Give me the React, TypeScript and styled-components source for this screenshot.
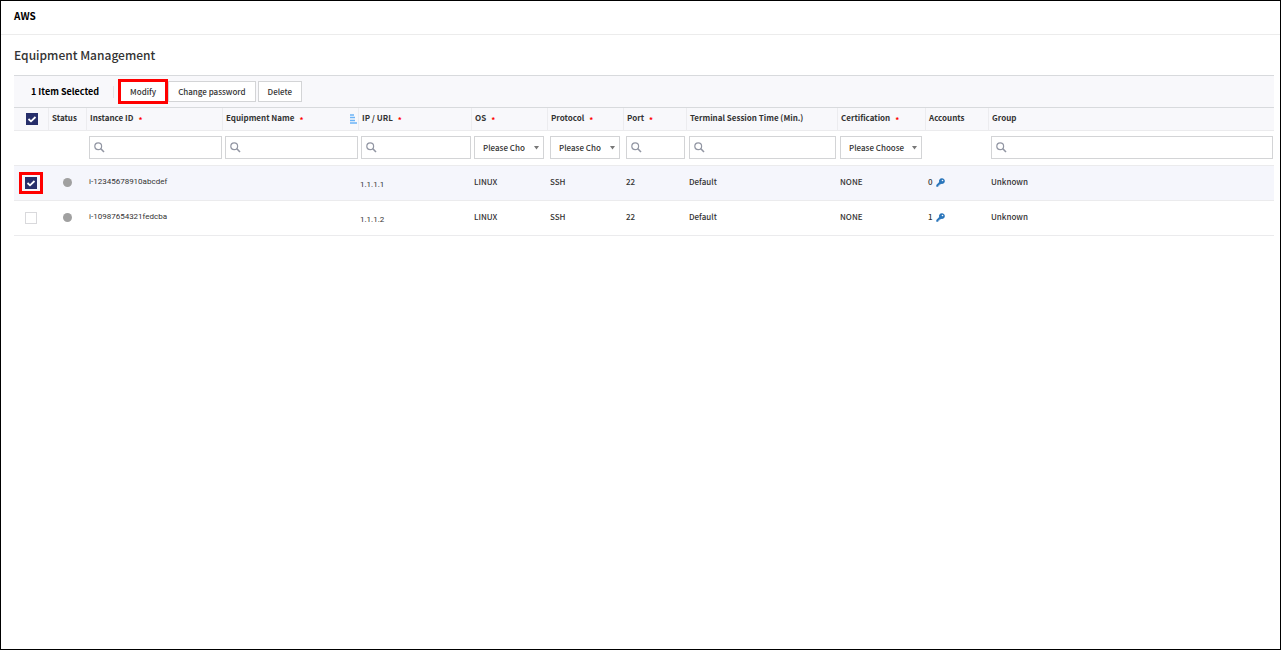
import React, { useState } from "react";
import styled, { createGlobalStyle, css } from "styled-components";

const GlobalStyle = createGlobalStyle`
  * { box-sizing: border-box; }
  body {
    margin: 0;
    background: #fff;
    color: #333;
    font-family: "Noto Sans CJK KR", "Noto Sans", sans-serif;
    font-size: 8px;
    font-weight: 500;
    line-height: 12px;
  }
  button, input, select { font: inherit; color: inherit; margin: 0; }
`;

const Page = styled.div`
  min-height: 100vh;
  border: 1px solid #000;
`;

const TopBar = styled.header`
  display: flex;
  align-items: center;
  height: 34px;
  padding: 0 13px 3px;
  border-bottom: 1px solid #ececec;
  color: #000;
  font-size: 10px;
  font-weight: 700;
`;

const Main = styled.main`
  padding: 10px 6px 0 13px;
`;

const Title = styled.h1`
  margin: 0 0 10px;
  color: #333;
  font-size: 12px;
  font-weight: 500;
  line-height: 20px;
`;

const Toolbar = styled.div`
  display: flex;
  align-items: center;
  gap: 2px;
  height: 32px;
  padding-left: 17px;
  border-top: 1px solid #d8dadd;
  background: #f8f8fb;
`;

const Selected = styled.div`
  margin-right: 4px;
  padding-right: 14px;
  border-right: 1px solid #e4e5e8;
  color: #000;
  font-size: 9px;
  font-weight: 700;
`;

const highlight = css`
  position: relative;
  &::after {
    content: "";
    position: absolute;
    inset: -3px;
    border: 3px solid #f00;
    pointer-events: none;
  }
`;

const ToolButton = styled.button<{ $marked?: boolean }>`
  height: 21px;
  padding: 0 9px;
  border: 1px solid #d3d4d6;
  background: #fff;
  color: #333;
  cursor: pointer;
  ${(p) => p.$marked && highlight}
`;

const Table = styled.table`
  width: 100%;
  table-layout: fixed;
  border-collapse: separate;
  border-spacing: 0;
  border-top: 1px solid #d8dadd;
`;

const HeadCell = styled.th`
  height: 23px;
  padding: 0 0 2px 3px;
  border-left: 1px solid #ececef;
  border-bottom: 1px solid #ebebed;
  background: #f8f8fb;
  font-weight: 700;
  text-align: left;
  white-space: nowrap;
  &:first-child { border-left: 0; }
`;

const HeadCheck = styled.div`
  padding: 2px 0 0 9px;
`;

const HeadLabel = styled.div`
  display: flex;
  align-items: center;
  height: 12px;
`;

const Required = styled.span`
  margin-left: 5px;
  padding-top: 3px;
  color: #f00;
`;

const SortIcon = styled.svg`
  margin: 2px 1px 0 auto;
`;

const FilterCell = styled.td`
  height: 35px;
  padding: 0 0 1px 3px;
  border-bottom: 1px solid #ebebed;
`;

const SearchBox = styled.label<{ $inset?: boolean }>`
  display: flex;
  align-items: center;
  height: 23px;
  margin-right: ${(p) => (p.$inset ? 1 : 0)}px;
  padding-left: 4px;
  border: 1px solid #d3d4d6;
  background: #fff;
  input {
    flex: 1;
    min-width: 0;
    border: 0;
    outline: 0;
    background: none;
  }
`;

const SelectBox = styled.div<{ $inset?: boolean }>`
  position: relative;
  margin-right: 3px;
  svg {
    position: absolute;
    top: 10px;
    right: 5px;
    pointer-events: none;
  }
  select {
    display: block;
    appearance: none;
    width: 100%;
    height: 23px;
    padding: 0 ${(p) => (p.$inset ? 18 : 16)}px 0 8px;
    border: 1px solid #d3d4d6;
    border-radius: 0;
    background: #fff;
  }
`;

const Row = styled.tr<{ $on: boolean }>`
  background: ${(p) => (p.$on ? "#f5f6fc" : "#fff")};
`;

const Cell = styled.td`
  height: 35px;
  padding: 0 0 2px 3px;
  border-bottom: 1px solid #ebebed;
  white-space: nowrap;
`;

const CheckCell = styled(Cell)`
  padding: 0 0 0 11px;
`;

const IdCell = styled(Cell)`
  font-family: Roboto, sans-serif;
  font-weight: 400;
`;

const AddressCell = styled(IdCell)`
  padding: 3px 0 0 2px;
`;

const CheckWrap = styled.span<{ $marked?: boolean }>`
  display: block;
  width: 12px;
  height: 12px;
  ${(p) => p.$marked && highlight}
  &::after { inset: -5px -6px; }
`;

const Check = styled.input`
  display: block;
  appearance: none;
  width: 12px;
  height: 12px;
  border: 1px solid #d9d9dc;
  background: #fff;
  &:checked {
    border-color: #272f6b;
    background: #272f6b
      url("data:image/svg+xml,%3Csvg xmlns='http://www.w3.org/2000/svg' viewBox='0 0 10 10'%3E%3Cpath d='M1.5 5l2.5 2.3L8.5 3' fill='none' stroke='%23fff' stroke-width='1.8'/%3E%3C/svg%3E");
  }
`;

const Dot = styled.span`
  display: block;
  width: 9px;
  height: 9px;
  margin-left: 12px;
  border-radius: 50%;
  background: #a0a0a0;
`;

const Accounts = styled.span`
  display: flex;
  align-items: center;
  gap: 3px;
`;

const SearchIcon = () => (
  <svg width="11" height="11" viewBox="0 0 11 11" fill="none" stroke="#9296a3" aria-hidden="true">
    <circle cx="4.2" cy="4.2" r="3.4" strokeWidth="1.2" />
    <path d="M6.8 6.8l3.2 3.2" strokeWidth="1.6" />
  </svg>
);

const KeyIcon = () => (
  <svg width="9" height="9" viewBox="0 0 9 9" aria-hidden="true">
    <path
      fill="#2b76bb"
      fillRule="evenodd"
      d="M5.8 .3a2.8 2.8 0 0 0-2.6 3.8L.3 7v1.7h2V7.6h1.1V6.4h1l.6-.7A2.8 2.8 0 1 0 5.8.3zM6.5 1.7a.8.8 0 1 1 0 1.6.8.8 0 0 1 0-1.6z"
    />
  </svg>
);

interface Column {
  label: string;
  width?: number;
  required?: boolean;
  sorted?: boolean;
  filter?: "search" | "select";
  inset?: boolean;
}

const columns: Column[] = [
  { label: "Status", width: 38 },
  { label: "Instance ID", width: 136, required: true, filter: "search" },
  { label: "Equipment Name", width: 136, required: true, sorted: true, filter: "search" },
  { label: "IP / URL", width: 113, required: true, filter: "search" },
  { label: "OS", width: 76, required: true, filter: "select", inset: true },
  { label: "Protocol", width: 76, required: true, filter: "select", inset: true },
  { label: "Port", width: 63, required: true, filter: "search", inset: true },
  { label: "Terminal Session Time (Min.)", width: 151, filter: "search", inset: true },
  { label: "Certification", width: 88, required: true, filter: "select" },
  { label: "Accounts", width: 63 },
  { label: "Group", filter: "search", inset: true },
];

const rows = [
  { id: "i-12345678910abcdef", ip: "1.1.1.1", accounts: 0 },
  { id: "i-10987654321fedcba", ip: "1.1.1.2", accounts: 1 },
];

export default function App() {
  const [selected, setSelected] = useState<string[]>([rows[0].id]);
  const toggle = (id: string) =>
    setSelected((s) => (s.includes(id) ? s.filter((x) => x !== id) : [...s, id]));

  return (
    <Page>
      <GlobalStyle />
      <TopBar>AWS</TopBar>
      <Main>
        <Title>Equipment Management</Title>
        <Toolbar>
          <Selected>{selected.length} Item Selected</Selected>
          <ToolButton $marked>Modify</ToolButton>
          <ToolButton>Change password</ToolButton>
          <ToolButton>Delete</ToolButton>
        </Toolbar>
        <Table>
          <colgroup>
            <col width={34} />
            {columns.map((c) => (
              <col key={c.label} width={c.width} />
            ))}
          </colgroup>
          <thead>
            <tr>
              <HeadCell>
                <HeadCheck>
                  <Check
                    type="checkbox"
                    aria-label="Select all"
                    checked={selected.length > 0}
                    onChange={() => setSelected(selected.length ? [] : rows.map((r) => r.id))}
                  />
                </HeadCheck>
              </HeadCell>
              {columns.map((c) => (
                <HeadCell key={c.label}>
                  <HeadLabel>
                    {c.label}
                    {c.required && <Required>*</Required>}
                    {c.sorted && (
                      <SortIcon width="8" height="10" viewBox="0 0 8 10" aria-hidden="true">
                        <path d="M1 1h4M1 3.5h5M1 6.5h5M1 9h7" stroke="#6cb4f7" strokeWidth="1.5" />
                      </SortIcon>
                    )}
                  </HeadLabel>
                </HeadCell>
              ))}
            </tr>
          </thead>
          <tbody>
            <tr>
              <FilterCell />
              {columns.map((c) => (
                <FilterCell key={c.label}>
                  {c.filter === "search" && (
                    <SearchBox $inset={c.inset}>
                      <SearchIcon />
                      <input type="text" aria-label={`Search ${c.label}`} />
                    </SearchBox>
                  )}
                  {c.filter === "select" && (
                    <SelectBox $inset={c.inset}>
                      <select aria-label={`Filter ${c.label}`}>
                        <option>Please Choose</option>
                      </select>
                      <svg width="5" height="4" viewBox="0 0 5 4" aria-hidden="true">
                        <path d="M0 0h5L2.5 3.5z" fill="#777" />
                      </svg>
                    </SelectBox>
                  )}
                </FilterCell>
              ))}
            </tr>
            {rows.map((r, i) => (
              <Row key={r.id} $on={selected.includes(r.id)}>
                <CheckCell>
                  <CheckWrap $marked={i === 0}>
                    <Check
                      type="checkbox"
                      aria-label={`Select ${r.id}`}
                      checked={selected.includes(r.id)}
                      onChange={() => toggle(r.id)}
                    />
                  </CheckWrap>
                </CheckCell>
                <Cell>
                  <Dot />
                </Cell>
                <IdCell>{r.id}</IdCell>
                <Cell />
                <AddressCell>{r.ip}</AddressCell>
                <Cell>LINUX</Cell>
                <Cell>SSH</Cell>
                <Cell>22</Cell>
                <Cell>Default</Cell>
                <Cell>NONE</Cell>
                <Cell>
                  <Accounts>
                    {r.accounts}
                    <KeyIcon />
                  </Accounts>
                </Cell>
                <Cell>Unknown</Cell>
              </Row>
            ))}
          </tbody>
        </Table>
      </Main>
    </Page>
  );
}
